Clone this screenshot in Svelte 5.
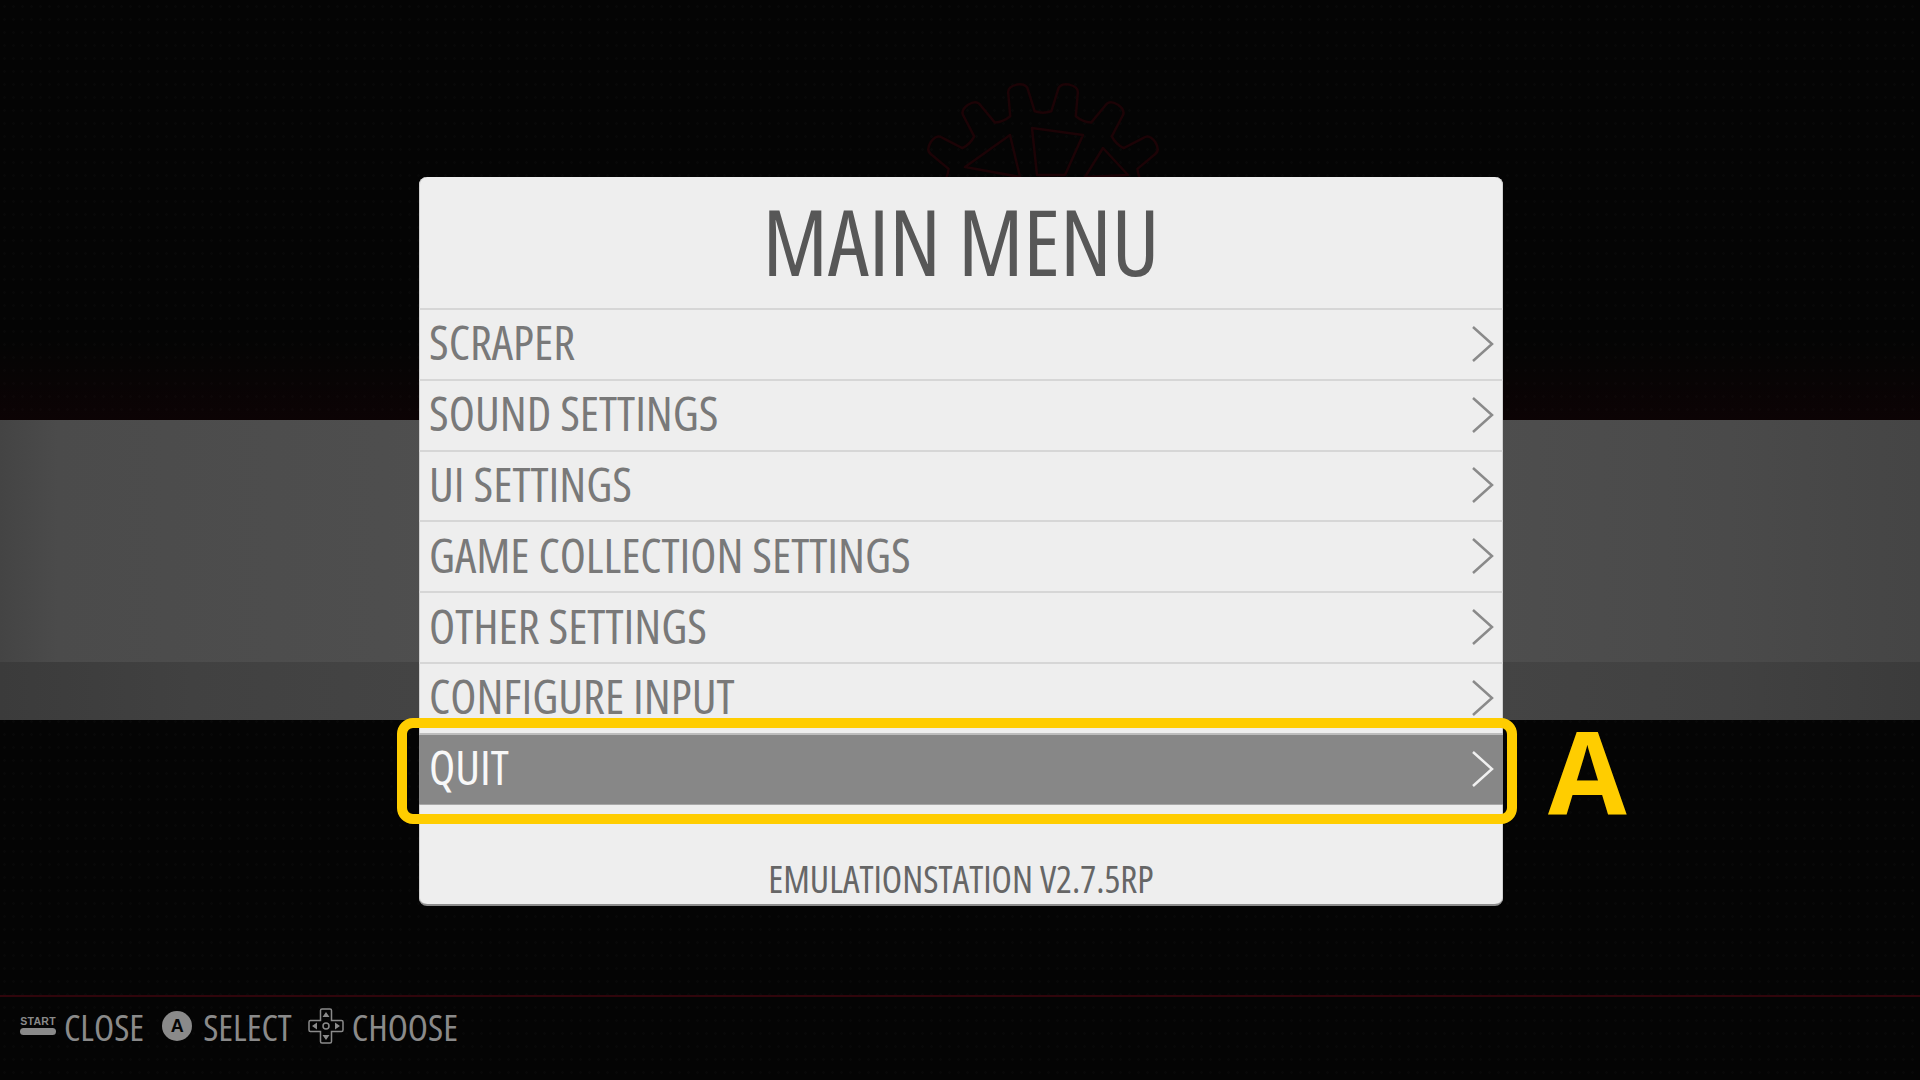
<script>
  const items = ['SCRAPER', 'SOUND SETTINGS', 'UI SETTINGS', 'GAME COLLECTION SETTINGS', 'OTHER SETTINGS', 'CONFIGURE INPUT', 'QUIT'];
  const selected = 'QUIT';

  // faint gear behind the panel, 16 rounded teeth
  function gearPath(cx, cy, outer, inner, teeth) {
    const step = (Math.PI * 2) / teeth;
    const pt = (r, t) => `${(cx + Math.sin(t) * r).toFixed(1)} ${(cy - Math.cos(t) * r).toFixed(1)}`;
    let d = '';
    for (let i = 0; i < teeth; i++) {
      const a = i * step + step / 2;
      d += `${i ? 'L' : 'M'}${pt(inner, a - 0.3 * step)}`;
      d += `L${pt(outer - 6, a - 0.2 * step)}`;
      d += `Q${pt(outer + 1, a - 0.19 * step)} ${pt(outer + 1, a)}`;
      d += `Q${pt(outer + 1, a + 0.19 * step)} ${pt(outer - 6, a + 0.2 * step)}`;
      d += `L${pt(inner, a + 0.3 * step)}`;
      d += `Q${pt(inner - 3, a + 0.5 * step)} ${pt(inner, a + 0.7 * step)}`;
    }
    return d + 'Z';
  }
  const gear = gearPath(183, 135, 134, 106, 16);
</script>

<div class="screen">
  <svg class="gear" width="366" height="270" viewBox="0 0 366 270" aria-hidden="true">
    <path d={gear} />
    <path d="M150 53L105 85L160 95Z M172 46L223 53L205 93L177 93Z M243 66L268 93L225 95Z" />
  </svg>

  <main>
    <div class="panel">
      <h1>MAIN MENU</h1>
      {#each items as item}
        <div class="row" class:selected={item === selected}>
          <span>{item}</span>
          <svg width="22" height="36" viewBox="0 0 22 36" aria-hidden="true">
            <path d="M1 1L20 18L1 35" />
          </svg>
          {#if item === selected}
            <div class="frame"></div>
            <div class="callout">A</div>
          {/if}
        </div>
      {/each}
      <div class="version">EMULATIONSTATION V2.7.5RP</div>
    </div>
  </main>

  <footer>
    <div class="help start-help">
      <div class="start"><small>START</small><i></i></div>
      <span>CLOSE</span>
    </div>
    <div class="help a-help">
      <div class="a-btn">A</div>
      <span>SELECT</span>
    </div>
    <div class="help dpad-help">
      <svg width="36" height="36" viewBox="0 0 36 36" aria-hidden="true">
        <path class="outline" d="M12.5 2.5a1.5 1.5 0 0 1 1.5-1.5h8a1.5 1.5 0 0 1 1.5 1.5V12.500h10a1.500 1.500 0 0 1 1.500 1.500v8a1.500 1.500 0 0 1-1.500 1.500h-10v10a1.500 1.500 0 0 1-1.500 1.500h-8a1.500 1.500 0 0 1-1.500-1.500v-10h-10a1.500 1.500 0 0 1-1.500-1.500v-8a1.500 1.500 0 0 1 1.500-1.500h10Z" />
        <circle class="outline" cx="18" cy="18" r="3" />
        <path class="fill" d="M18 4l3.500 5h-7ZM18 32l3.500-5h-7ZM4 18l5-3.500v7ZM32 18l-5-3.500v7Z" />
      </svg>
      <span>CHOOSE</span>
    </div>
  </footer>
</div>

<style>
  :global(body) {
    margin: 0;
    background: #030303;
  }

  .screen {
    position: relative;
    width: 1920px;
    height: 1080px;
    overflow: hidden;
    font-family: "Open Sans", "Liberation Sans", sans-serif;
    font-stretch: 75%;
    background:
      linear-gradient(to right, #3b3b3b 0, #414141 20%, #4b4b4b 100%) 0 662px / 50% 58px no-repeat,
      linear-gradient(to left, #3b3b3b 0, #414141 20%, #4b4b4b 100%) 100% 662px / 50% 58px no-repeat,
      linear-gradient(to right, #444 0, #4b4b4b 6%, #4e4e4e 40%, #565656 100%) 0 420px / 50% 300px no-repeat,
      linear-gradient(to left, #454545 0, #4a4a4a 20%, #565656 100%) 100% 420px / 50% 300px no-repeat,
      linear-gradient(to bottom, transparent 0, rgba(40, 0, 6, 0.22) 100%) 0 340px / 100% 80px no-repeat,
      radial-gradient(circle, #080808 1px, transparent 1.6px) 0 0 / 9px 13px,
      #040404;
  }

  .gear {
    position: absolute;
    left: 860px;
    top: 82px;
  }

  .gear path {
    fill: none;
    stroke: #1c0306;
    stroke-width: 2.5;
    stroke-linejoin: round;
  }

  main {
    position: relative;
    height: 995px;
    padding-top: 177px;
    box-sizing: border-box;
  }

  .panel {
    width: 1084px;
    height: 729px;
    margin-left: 419px;
    box-sizing: border-box;
    display: flex;
    flex-direction: column;
    background: #eeeeee;
    border-radius: 8px;
    border-bottom: 2px solid #8c8c8c;
    box-shadow: inset 1px 0 0 #d0d0d0, inset -1px 0 0 #d0d0d0;
  }

  h1 {
    margin: 0;
    height: 131px;
    font-size: 92px;
    font-weight: 400;
    line-height: 127px;
    text-align: center;
    color: #575757;
  }

  .row {
    position: relative;
    height: 70.8px;
    flex: none;
    box-sizing: border-box;
    display: flex;
    align-items: center;
    justify-content: space-between;
    padding: 0 9px 3px 10px;
    border-top: 2px solid #d6d6d6;
    font-size: 48px;
    color: #797979;
  }

  .row span {
    margin-bottom: 2px;
  }

  .row svg {
    margin-top: 2px;
  }

  .row svg path {
    fill: none;
    stroke: #8a8a8a;
    stroke-width: 2.5;
  }

  .row.selected {
    background: #878787;
    color: #f8f8f8;
    border-top-color: #bdbdbd;
    border-bottom: 1px solid #a8a8a8;
    height: 72px;
  }

  .row.selected svg path {
    stroke: #f0f0f0;
  }

  .frame {
    position: absolute;
    left: -22px;
    right: -14px;
    top: -17px;
    bottom: -20px;
    border: 10px solid #ffcd00;
    border-radius: 16px;
  }

  .callout {
    position: absolute;
    left: 1129px;
    top: -44px;
    font-size: 114px;
    font-weight: 700;
    font-stretch: 100%;
    line-height: 160px;
    color: #ffcd00;
  }

  .version {
    margin-top: auto;
    height: 50px;
    line-height: 50px;
    text-align: center;
    font-size: 37.4px;
    color: #666666;
  }

  footer {
    height: 85px;
    box-sizing: border-box;
    border-top: 2px solid #30050b;
    display: flex;
    align-items: center;
    padding: 0 0 25px 20px;
    color: #8a8a8a;
    font-size: 37px;
  }

  .help {
    display: flex;
    align-items: center;
  }

  .start-help { gap: 8px; margin-right: 18px; }
  .a-help { gap: 11px; margin-right: 16px; }
  .dpad-help { gap: 8px; }

  .start {
    width: 36px;
    display: flex;
    flex-direction: column;
    gap: 2px;
  }

  .start small {
    font-family: "Liberation Sans", sans-serif;
    font-size: 10.5px;
    font-weight: 700;
    font-stretch: 100%;
    line-height: 9px;
    letter-spacing: 0.3px;
    color: #8a8a8a;
    text-align: center;
  }

  .start i {
    display: block;
    height: 7px;
    border-radius: 4px;
    background: #8a8a8a;
  }

  .a-btn {
    width: 30px;
    height: 30px;
    border-radius: 50%;
    background: #8a8a8a;
    color: #050505;
    font-family: "Liberation Sans", sans-serif;
    font-size: 18px;
    font-weight: 700;
    font-stretch: 100%;
    text-align: center;
    line-height: 30px;
  }

  .outline {
    fill: none;
    stroke: #8a8a8a;
    stroke-width: 1.500;
  }

  .fill {
    fill: #8a8a8a;
  }
</style>
